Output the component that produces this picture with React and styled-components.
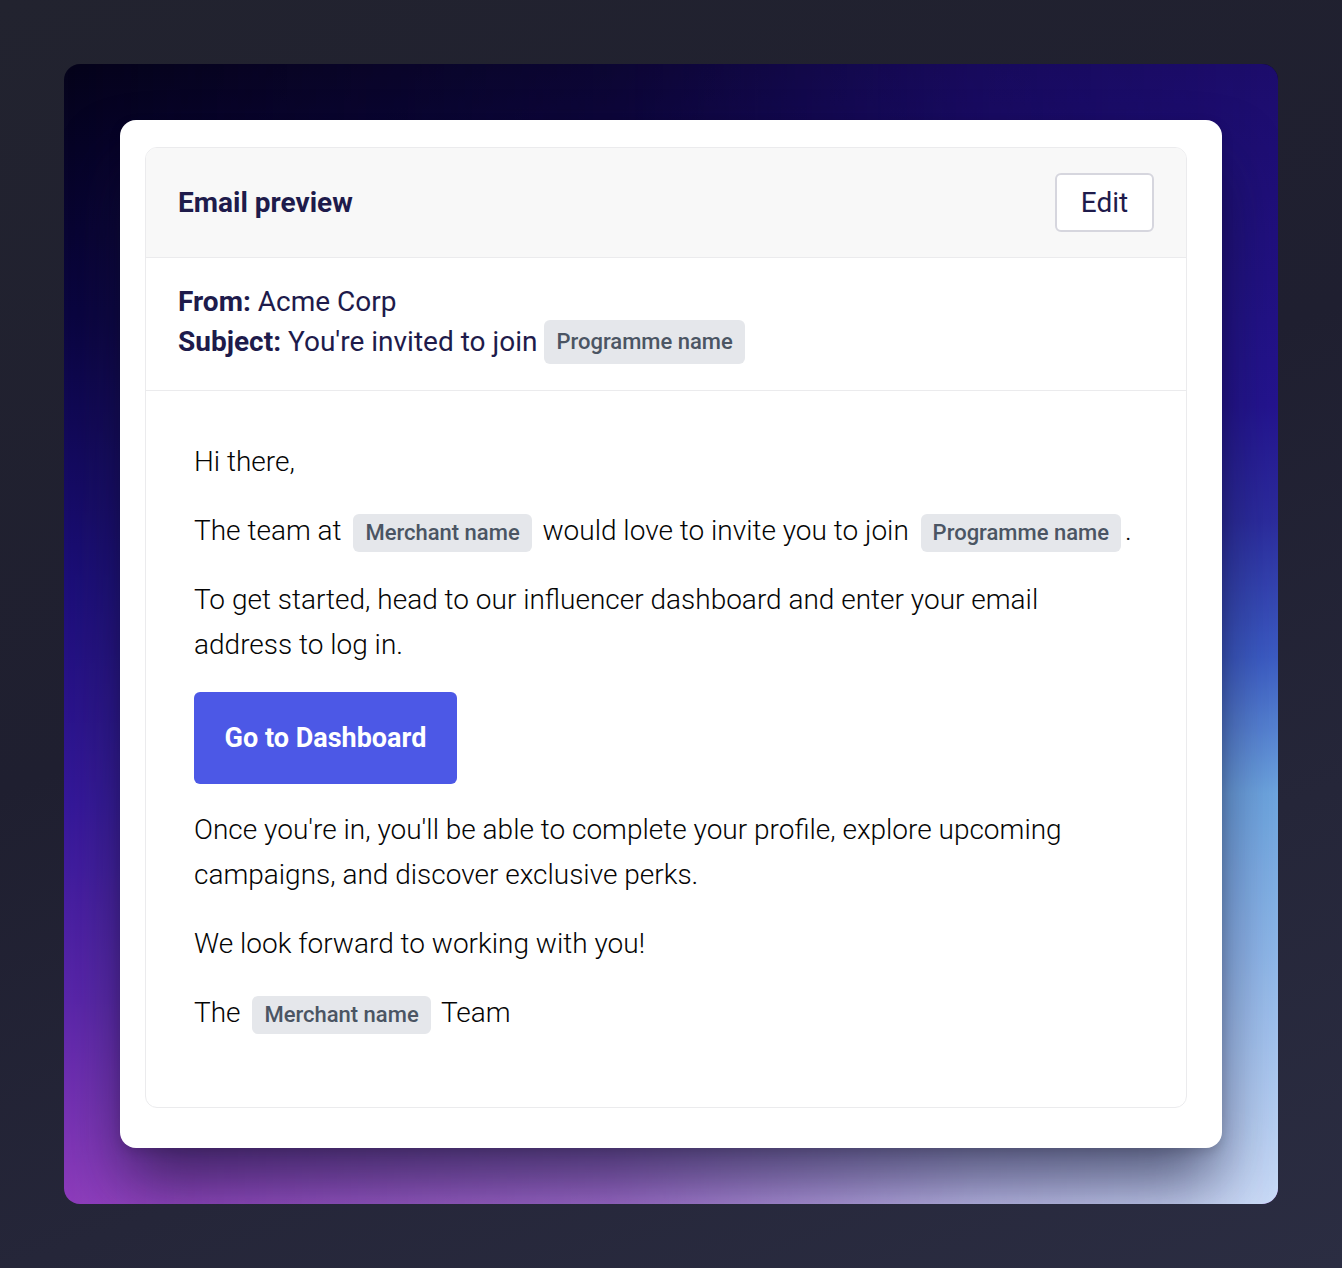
import React from "react";
import styled, { createGlobalStyle } from "styled-components";

const GlobalStyle = createGlobalStyle`
  html, body {
    margin: 0;
    padding: 0;
  }
  body {
    font-family: Roboto, "Liberation Sans", Arial, sans-serif;
    background: linear-gradient(160deg, #22232f 0%, #1f1f30 45%, #2b2d42 100%);
    min-height: 1268px;
  }
`;

const Page = styled.div`
  padding: 64px;
  box-sizing: border-box;
  width: 1342px;
  height: 1268px;
`;

// left column of the mesh is the base, the right column fades in over it
const Backdrop = styled.div`
  position: relative;
  box-sizing: border-box;
  height: 1140px;
  border-radius: 16px;
  padding: 56px;
  overflow: hidden;
  background: linear-gradient(
    180deg,
    #05031a 0%,
    #0b0640 22%,
    #1c0f78 45%,
    #36189a 65%,
    #5a26aa 82%,
    #8e3cbc 100%
  );

  &::before {
    content: "";
    position: absolute;
    inset: 0;
    background: linear-gradient(
      180deg,
      #1c0c6c 0%,
      #241490 30%,
      #2c2c9e 40%,
      #3c5cc4 52%,
      #6ea6e0 64%,
      #8fb8ea 78%,
      #cadcf7 100%
    );
    -webkit-mask-image: linear-gradient(90deg, transparent 0%, rgba(0, 0, 0, 0.3) 45%, rgba(0, 0, 0, 0.8) 75%, #000 100%);
    mask-image: linear-gradient(90deg, transparent 0%, rgba(0, 0, 0, 0.3) 45%, rgba(0, 0, 0, 0.8) 75%, #000 100%);
  }
`;

const Card = styled.div`
  position: relative;
  z-index: 1;
  background: #ffffff;
  border-radius: 16px;
  height: 1028px;
  box-sizing: border-box;
  padding: 27px 35px 40px 25px;
  box-shadow: 0 40px 64px -6px rgba(18, 16, 44, 0.62), 0 4px 12px rgba(0, 0, 0, 0.15);
`;

const Preview = styled.div`
  border: 1px solid #ebebed;
  border-radius: 12px;
  overflow: hidden;
  height: 100%;
  box-sizing: border-box;
`;

const Header = styled.div`
  display: flex;
  align-items: center;
  justify-content: space-between;
  height: 110px;
  box-sizing: border-box;
  padding: 0 32px;
  background: #f8f8f8;
  border-bottom: 1px solid #ebebed;
`;

const Title = styled.h2`
  margin: 0;
  font-size: 28px;
  font-weight: 700;
  color: #1e1b4b;
`;

const EditButton = styled.button`
  width: 99px;
  height: 59px;
  border: 2px solid #d6d6de;
  border-radius: 6px;
  background: #ffffff;
  font-family: inherit;
  font-size: 28px;
  color: #1e1b4b;
  cursor: pointer;
`;

const Meta = styled.div`
  padding: 24px 32px 28px;
  border-bottom: 1px solid #ebebed;
  font-size: 28px;
  color: #1e1b4b;
`;

const MetaLine = styled.div`
  line-height: 40px;
  height: 40px;
  display: flex;
  align-items: center;
`;

const Label = styled.strong`
  font-weight: 700;
  margin-right: 7px;
`;

const Chip = styled.span`
  display: inline-block;
  box-sizing: border-box;
  height: ${(p) => (p.$tall ? 44 : 38)}px;
  line-height: ${(p) => (p.$tall ? 44 : 38)}px;
  padding: 0 12px;
  margin: 0 4px 0 ${(p) => (p.$tall ? 7 : 5)}px;
  border-radius: 6px;
  background: #e5e7eb;
  color: #4b5563;
  font-size: 22px;
  font-weight: 500;
  vertical-align: middle;
`;

const Body = styled.div`
  padding: 48px;
  font-size: 28px;
  font-weight: 300;
  color: #050505;
`;

const Para = styled.p`
  margin: 0 0 24px;
  line-height: 45px;
  max-width: ${(p) => (p.$wide ? "none" : "900px")};
  white-space: ${(p) => (p.$wide ? "nowrap" : "normal")};
`;

const CtaButton = styled.a`
  display: inline-flex;
  align-items: center;
  justify-content: center;
  width: 263px;
  height: 92px;
  margin: 1px 0 23px;
  border-radius: 6px;
  background: #4c58e6;
  color: #ffffff;
  font-size: 27px;
  font-weight: 700;
  text-decoration: none;
`;

export default function App() {
  return (
    <>
      <GlobalStyle />
      <Page>
        <Backdrop>
          <Card>
            <Preview>
              <Header>
                <Title>Email preview</Title>
                <EditButton>Edit</EditButton>
              </Header>
              <Meta>
                <MetaLine>
                  <Label>From:</Label>Acme Corp
                </MetaLine>
                <MetaLine>
                  <Label>Subject:</Label>You're invited to join{" "}
                  <Chip $tall>Programme name</Chip>
                </MetaLine>
              </Meta>
              <Body>
                <Para>Hi there,</Para>
                <Para $wide>
                  The team at <Chip>Merchant name</Chip> would love to invite you
                  to join <Chip>Programme name</Chip>.
                </Para>
                <Para>
                  To get started, head to our influencer dashboard and enter your
                  email address to log in.
                </Para>
                <CtaButton href="#">Go to Dashboard</CtaButton>
                <Para>
                  Once you're in, you'll be able to complete your profile, explore
                  upcoming campaigns, and discover exclusive perks.
                </Para>
                <Para>We look forward to working with you!</Para>
                <Para>
                  The <Chip>Merchant name</Chip> Team
                </Para>
              </Body>
            </Preview>
          </Card>
        </Backdrop>
      </Page>
    </>
  );
}
